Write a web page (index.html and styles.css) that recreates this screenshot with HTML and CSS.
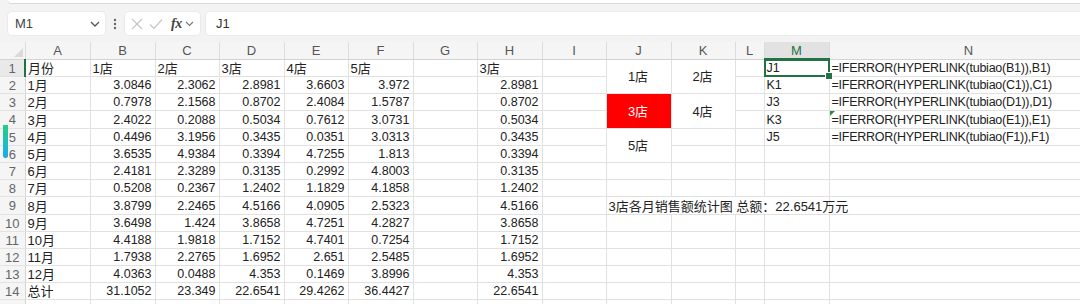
FILE: index.html
```html
<!DOCTYPE html>
<html lang="zh">
<head>
<meta charset="utf-8">
<title>Sheet</title>
<link rel="stylesheet" href="styles.css">
</head>
<body>
<div class="app">
  <div class="topstrip"><div class="ribbon-edge"></div></div>
  <div class="fbar">
    <div class="namebox">
      <span class="nb-text">M1</span>
      <svg class="chev" width="10" height="6" viewBox="0 0 10 6"><path d="M1 1 L5 5 L9 1" fill="none" stroke="#555" stroke-width="1.3"/></svg>
    </div>
    <div class="dots">
      <svg width="4" height="12" viewBox="0 0 4 12"><circle cx="2" cy="2" r="1.2" fill="#666"/><circle cx="2" cy="6" r="1.2" fill="#666"/><circle cx="2" cy="10" r="1.2" fill="#666"/></svg>
    </div>
    <div class="fxbox">
      <svg class="ico" width="12" height="12" viewBox="0 0 12 12"><path d="M1 1 L11 11 M11 1 L1 11" stroke="#c4c4c4" stroke-width="1.2"/></svg>
      <svg class="ico" width="14" height="12" viewBox="0 0 14 12"><path d="M1 6.5 L5 10.5 L13 1.5" fill="none" stroke="#c4c4c4" stroke-width="1.2"/></svg>
      <span class="fx">fx</span>
      <svg class="chev2" width="9" height="6" viewBox="0 0 9 6"><path d="M1 1 L4.5 4.5 L8 1" fill="none" stroke="#777" stroke-width="1.1"/></svg>
    </div>
    <div class="formula">J1</div>
  </div>
  <div class="gridwrap">
    <table class="sheet">
      <colgroup>
        <col class="w-rh"><col class="w65"><col class="w65"><col class="w64"><col class="w65"><col class="w64"><col class="w65"><col class="w64"><col class="w65"><col class="w64"><col class="w65"><col class="w64"><col class="w29"><col class="w65"><col class="w279">
      </colgroup>
      <thead>
        <tr>
          <th class="corner"><span class="tri"></span></th>
          <th>A</th><th>B</th><th>C</th><th>D</th><th>E</th><th>F</th><th>G</th><th>H</th><th>I</th><th>J</th><th>K</th><th>L</th><th class="hact">M</th><th>N</th>
        </tr>
      </thead>
      <tbody>
        <tr>
          <th class="rh ract">1</th>
          <td class="t z">月份</td><td class="t z">1店</td><td class="t z">2店</td><td class="t z">3店</td><td class="t z">4店</td><td class="t z">5店</td><td></td><td class="t z">3店</td><td></td>
          <td rowspan="2" class="m z">1店</td><td rowspan="2" class="m z">2店</td><td></td>
          <td class="t sel">J1</td><td class="t f">=IFERROR(HYPERLINK(tubiao(B1)),B1)</td>
        </tr>
        <tr>
          <th class="rh">2</th>
          <td class="t z">1月</td><td class="n">3.0846</td><td class="n">2.3062</td><td class="n">2.8981</td><td class="n">3.6603</td><td class="n">3.972</td><td></td><td class="n">2.8981</td><td></td>
          <td></td><td class="t">K1</td><td class="t f">=IFERROR(HYPERLINK(tubiao(C1)),C1)</td>
        </tr>
        <tr>
          <th class="rh">3</th>
          <td class="t z">2月</td><td class="n">0.7978</td><td class="n">2.1568</td><td class="n">0.8702</td><td class="n">2.4084</td><td class="n">1.5787</td><td></td><td class="n">0.8702</td><td></td>
          <td rowspan="2" class="m z red">3店</td><td rowspan="2" class="m z">4店</td><td></td>
          <td class="t">J3</td><td class="t f">=IFERROR(HYPERLINK(tubiao(D1)),D1)</td>
        </tr>
        <tr>
          <th class="rh">4</th>
          <td class="t z">3月</td><td class="n">2.4022</td><td class="n">0.2088</td><td class="n">0.5034</td><td class="n">0.7612</td><td class="n">3.0731</td><td></td><td class="n">0.5034</td><td></td>
          <td></td><td class="t">K3</td><td class="t f err">=IFERROR(HYPERLINK(tubiao(E1)),E1)</td>
        </tr>
        <tr>
          <th class="rh">5</th>
          <td class="t z">4月</td><td class="n">0.4496</td><td class="n">3.1956</td><td class="n">0.3435</td><td class="n">0.0351</td><td class="n">3.0313</td><td></td><td class="n">0.3435</td><td></td>
          <td rowspan="2" class="m z">5店</td><td></td><td></td>
          <td class="t">J5</td><td class="t f">=IFERROR(HYPERLINK(tubiao(F1)),F1)</td>
        </tr>
        <tr>
          <th class="rh">6</th>
          <td class="t z">5月</td><td class="n">3.6535</td><td class="n">4.9384</td><td class="n">0.3394</td><td class="n">4.7255</td><td class="n">1.813</td><td></td><td class="n">0.3394</td><td></td>
          <td></td><td></td><td></td><td></td>
        </tr>
        <tr>
          <th class="rh">7</th>
          <td class="t z">6月</td><td class="n">2.4181</td><td class="n">2.3289</td><td class="n">0.3135</td><td class="n">0.2992</td><td class="n">4.8003</td><td></td><td class="n">0.3135</td><td></td>
          <td></td><td></td><td></td><td></td><td></td>
        </tr>
        <tr>
          <th class="rh">8</th>
          <td class="t z">7月</td><td class="n">0.5208</td><td class="n">0.2367</td><td class="n">1.2402</td><td class="n">1.1829</td><td class="n">4.1858</td><td></td><td class="n">1.2402</td><td></td>
          <td></td><td></td><td></td><td></td><td></td>
        </tr>
        <tr>
          <th class="rh">9</th>
          <td class="t z">8月</td><td class="n">3.8799</td><td class="n">2.2465</td><td class="n">4.5166</td><td class="n">4.0905</td><td class="n">2.5323</td><td></td><td class="n">4.5166</td><td></td>
          <td colspan="4" class="t z over">3店各月销售额统计图 总额：22.6541万元</td><td></td>
        </tr>
        <tr>
          <th class="rh">10</th>
          <td class="t z">9月</td><td class="n">3.6498</td><td class="n">1.424</td><td class="n">3.8658</td><td class="n">4.7251</td><td class="n">4.2827</td><td></td><td class="n">3.8658</td><td></td>
          <td></td><td></td><td></td><td></td><td></td>
        </tr>
        <tr>
          <th class="rh">11</th>
          <td class="t z">10月</td><td class="n">4.4188</td><td class="n">1.9818</td><td class="n">1.7152</td><td class="n">4.7401</td><td class="n">0.7254</td><td></td><td class="n">1.7152</td><td></td>
          <td></td><td></td><td></td><td></td><td></td>
        </tr>
        <tr>
          <th class="rh">12</th>
          <td class="t z">11月</td><td class="n">1.7938</td><td class="n">2.2765</td><td class="n">1.6952</td><td class="n">2.651</td><td class="n">2.5485</td><td></td><td class="n">1.6952</td><td></td>
          <td></td><td></td><td></td><td></td><td></td>
        </tr>
        <tr>
          <th class="rh">13</th>
          <td class="t z">12月</td><td class="n">4.0363</td><td class="n">0.0488</td><td class="n">4.353</td><td class="n">0.1469</td><td class="n">3.8996</td><td></td><td class="n">4.353</td><td></td>
          <td></td><td></td><td></td><td></td><td></td>
        </tr>
        <tr>
          <th class="rh">14</th>
          <td class="t z">总计</td><td class="n">31.1052</td><td class="n">23.349</td><td class="n">22.6541</td><td class="n">29.4262</td><td class="n">36.4427</td><td></td><td class="n">22.6541</td><td></td>
          <td></td><td></td><td></td><td></td><td></td>
        </tr>
        <tr>
          <th class="rh"></th>
          <td></td><td></td><td></td><td></td><td></td><td></td><td></td><td></td><td></td><td></td><td></td><td></td><td></td><td></td>
        </tr>
      </tbody>
    </table>
    <div class="cursorbar"></div>
  </div>
</div>
</body>
</html>
```

FILE: styles.css
```css
* { box-sizing: border-box; }
html, body { margin: 0; padding: 0; }
body {
  width: 1080px;
  height: 304px;
  overflow: hidden;
  background: #f3f3f3;
  font-family: "Liberation Sans", "Noto Sans CJK SC", sans-serif;
  color: #222;
}
.app { display: flex; flex-direction: column; height: 304px; }

.topstrip { height: 4px; padding-left: 8px; background: #f3f3f3; }
.ribbon-edge {
  height: 3px;
  background: #fff;
  border-bottom-left-radius: 6px;
  box-shadow: 0 1px 1px rgba(0, 0, 0, 0.12);
}

.fbar {
  height: 38px;
  flex: none;
  display: flex;
  align-items: flex-start;
  padding: 8px 0 0 8px;
  background: #f3f3f3;
}
.namebox {
  width: 97px;
  height: 23px;
  background: #fff;
  border-radius: 4px;
  display: flex;
  align-items: center;
  justify-content: space-between;
  padding: 0 5px 0 7px;
  box-shadow: 0 0 0 1px #eaeaea;
}
.nb-text { font-size: 13px; color: #444; }
.dots { width: 20px; height: 23px; display: flex; align-items: center; justify-content: center; }
.fxbox {
  width: 75px;
  height: 23px;
  background: #fff;
  border-radius: 4px;
  display: flex;
  align-items: center;
  padding-left: 6px;
  gap: 6px;
  box-shadow: 0 0 0 1px #eaeaea;
}
.fx {
  font-family: "Liberation Serif", serif;
  font-style: italic;
  font-weight: bold;
  font-size: 14px;
  color: #444;
  margin-left: 2px;
  letter-spacing: -0.5px;
}
.chev2 { margin-left: -3px; }
.formula {
  flex: 1;
  margin-left: 6px;
  height: 23px;
  background: #fff;
  border-radius: 4px 0 0 4px;
  display: flex;
  align-items: center;
  padding-left: 10px;
  font-size: 13px;
  color: #333;
  box-shadow: 0 0 0 1px #eaeaea;
}

.gridwrap { position: relative; flex: 1; overflow: hidden; background: #fff; }
.sheet {
  border-collapse: collapse;
  table-layout: fixed;
  width: 1108px;
  font-size: 12.5px;
}
.w-rh { width: 25px; }
.w65 { width: 65px; }
.w64 { width: 64px; }
.w29 { width: 29px; }
.w279 { width: 279px; }

.sheet thead tr { height: 17px; }
.sheet thead th {
  padding: 1px 0 0;
  background: #f5f5f5;
  font-weight: normal;
  font-size: 13px;
  color: #555;
  border-right: 1px solid #dcdcdc;
  border-bottom: 1px solid #d4d4d4;
  line-height: 15px;
  text-align: center;
}
.sheet thead th.hact {
  background: #e2e2e2;
  color: #217346;
  border-bottom: 2px solid #217346;
}
.corner { position: relative; }
.tri {
  position: absolute;
  right: 2px;
  bottom: 2px;
  width: 0;
  height: 0;
  border-left: 9px solid transparent;
  border-bottom: 9px solid #dadada;
}
.sheet tbody tr { height: 17.2px; }
.sheet th.rh {
  padding: 1px 0 0;
  background: #f5f5f5;
  font-weight: normal;
  font-size: 13px;
  color: #666;
  text-align: center;
  border-right: 1px solid #d4d4d4;
  border-bottom: 1px solid #e3e3e3;
  line-height: 15px;
}
.sheet th.ract {
  background: #e9e9e9;
  border-right: 2px solid #217346;
}
.sheet td {
  padding: 1px 3px 0 2px;
  border: 1px solid #e1e1e1;
  line-height: 15px;
  white-space: nowrap;
  overflow: hidden;
  vertical-align: bottom;
}
.z { font-size: 13px; }
.t { text-align: left; }
.n { text-align: right; }
.m { text-align: center; vertical-align: middle !important; }
.red { background: #ff0000; color: #fff; }
.f { overflow: visible !important; letter-spacing: -0.25px; }
.over {
  overflow: visible !important;
  border-left: 1px solid #e1e1e1;
  border-right: 1px solid #e1e1e1;
}
.sel { position: relative; overflow: visible !important; }
.sel::after {
  content: "";
  position: absolute;
  left: -1px;
  top: -1px;
  right: -1px;
  bottom: -1px;
  border: 2px solid #217346;
}
.sel::before {
  content: "";
  position: absolute;
  right: -4px;
  bottom: -4px;
  width: 6px;
  height: 6px;
  background: #217346;
  border: 1px solid #fff;
  z-index: 2;
}
.err { position: relative; }
.err::before {
  content: "";
  position: absolute;
  left: 0;
  top: 0;
  width: 0;
  height: 0;
  border-top: 5px solid #2e8b3e;
  border-right: 5px solid transparent;
}
.cursorbar {
  position: absolute;
  left: 3px;
  top: 83px;
  width: 5px;
  height: 33px;
  border-radius: 0 0 3px 3px;
  background: linear-gradient(#25cf7d, #18b9d6 70%, #1aa8e8);
}
```
